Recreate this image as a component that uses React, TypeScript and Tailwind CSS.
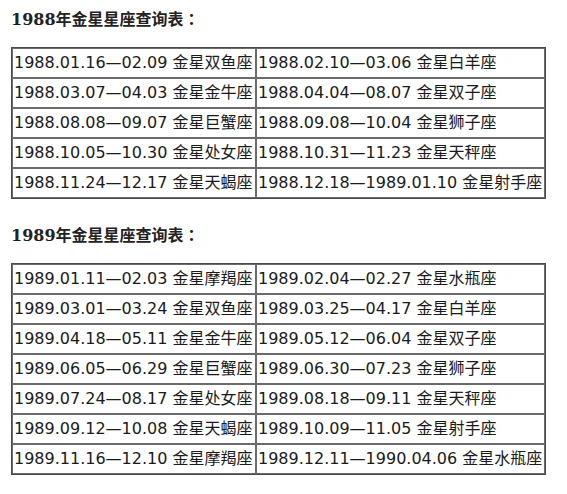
import React from "react";

const t1: [string, string][] = [
  ["1988.01.16—02.09 金星双鱼座", "1988.02.10—03.06 金星白羊座"],
  ["1988.03.07—04.03 金星金牛座", "1988.04.04—08.07 金星双子座"],
  ["1988.08.08—09.07 金星巨蟹座", "1988.09.08—10.04 金星狮子座"],
  ["1988.10.05—10.30 金星处女座", "1988.10.31—11.23 金星天秤座"],
  ["1988.11.24—12.17 金星天蝎座", "1988.12.18—1989.01.10 金星射手座"],
];

const t2: [string, string][] = [
  ["1989.01.11—02.03 金星摩羯座", "1989.02.04—02.27 金星水瓶座"],
  ["1989.03.01—03.24 金星双鱼座", "1989.03.25—04.17 金星白羊座"],
  ["1989.04.18—05.11 金星金牛座", "1989.05.12—06.04 金星双子座"],
  ["1989.06.05—06.29 金星巨蟹座", "1989.06.30—07.23 金星狮子座"],
  ["1989.07.24—08.17 金星处女座", "1989.08.18—09.11 金星天秤座"],
  ["1989.09.12—10.08 金星天蝎座", "1989.10.09—11.05 金星射手座"],
  ["1989.11.16—12.10 金星摩羯座", "1989.12.11—1990.04.06 金星水瓶座"],
];

function Title({ text }: { text: string }) {
  return (
    <div className="h-[24px] text-[16px] leading-[24px] font-bold text-[#222] font-['DejaVu_Serif','Noto_Sans_CJK_SC',serif] whitespace-nowrap">
      {text}
      <span className="font-['Noto_Sans_CJK_TC',sans-serif]">：</span>
    </div>
  );
}

function Table({ rows }: { rows: [string, string][] }) {
  return (
    <table className="table-fixed w-[535px] border-separate border-spacing-0 border border-[#4a4a4a] text-[16px] text-[#1a1a1a] font-['DejaVu_Sans','Noto_Sans_CJK_SC',sans-serif]">
      <tbody>
        {rows.map((r, i) => (
          <tr key={i}>
            <td className="w-[244px] border border-[#6b6b6b] px-px py-px leading-[26px] whitespace-nowrap overflow-hidden">
              {r[0]}
            </td>
            <td className="border border-[#6b6b6b] px-px py-px leading-[26px] whitespace-nowrap overflow-hidden">
              {r[1]}
            </td>
          </tr>
        ))}
      </tbody>
    </table>
  );
}

export default function App() {
  return (
    <div className="w-[567px] h-[494px] bg-white pl-[11px] pt-[6px]">
      <Title text="1988年金星星座查询表" />
      <div className="h-[17px]" />
      <Table rows={t1} />
      <div className="h-[23px]" />
      <Title text="1989年金星星座查询表" />
      <div className="h-[17px]" />
      <Table rows={t2} />
    </div>
  );
}
